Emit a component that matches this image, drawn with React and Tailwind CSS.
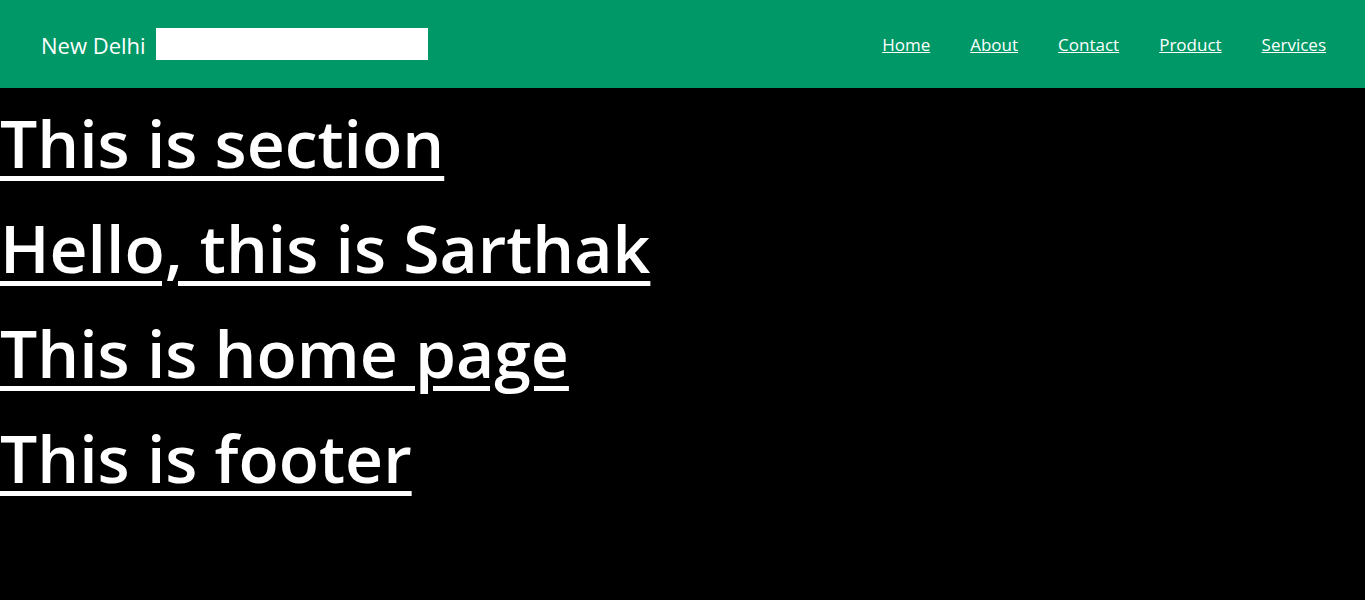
export default function App() {
  const lines = ['This is section', 'Hello, this is Sarthak', 'This is home page', 'This is footer'];
  return (
    <div className="min-h-[600px] bg-black font-['Open_Sans',sans-serif] text-white">
      <nav className="flex h-[88px] items-center justify-between bg-[#009866] pl-[41px] pr-[39px]">
        <div className="flex items-center gap-[10px]">
          <span className="pt-[2px] text-[22px]">New Delhi</span>
          <input className="h-[32px] w-[272px] bg-white text-black outline-none" />
        </div>
        <ul className="flex items-center gap-[40px] pt-[2px] text-[17px]">
          {['Home', 'About', 'Contact', 'Product', 'Services'].map((l) => (
            <li key={l}>
              <a href="#" className="underline">{l}</a>
            </li>
          ))}
        </ul>
      </nav>
      <div>
        {lines.map((t) => (
          <h1 key={t} className="h-[105px] pt-[2px] text-[66px] font-semibold leading-[105px] underline decoration-[5px] underline-offset-[8px]">
            {t}
          </h1>
        ))}
      </div>
    </div>
  );
}
